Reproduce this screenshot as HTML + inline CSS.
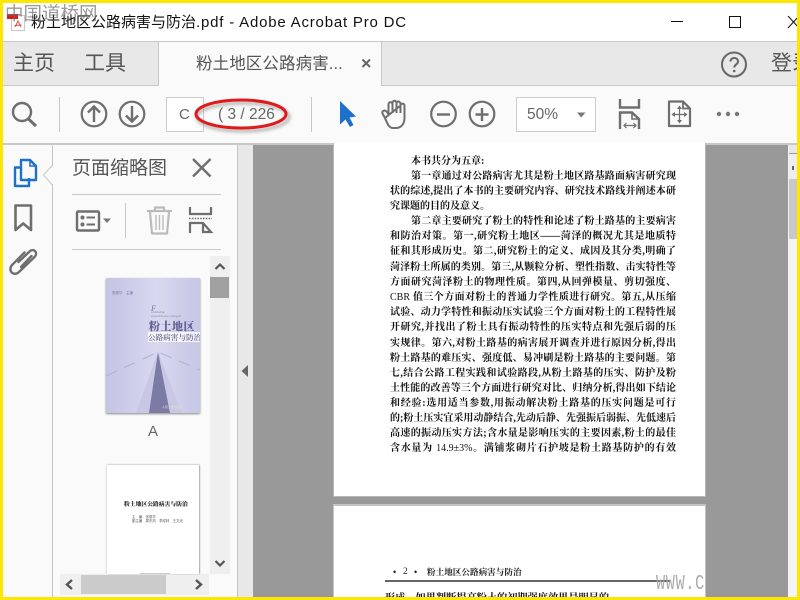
<!DOCTYPE html>
<html lang="zh"><head><meta charset="utf-8"><title>Acrobat</title>
<style>
html,body{margin:0;padding:0;background:#fff}
#r{position:relative;width:800px;height:600px;overflow:hidden;background:#fff;font-family:"Liberation Sans","Noto Sans CJK SC",sans-serif}
.a{position:absolute}
.t{position:absolute;white-space:nowrap;line-height:1}
.l{position:absolute;left:390px;width:286px;height:14px;margin-top:2px;overflow:hidden;font:700 10px/14px "Liberation Serif","Noto Serif CJK SC",serif;color:#111;text-align:justify;text-align-last:justify;filter:blur(.25px)}
.l span{font-weight:400}
.i{left:411px;width:265px}
.n{text-align-last:left}
</style></head><body><div id="r">
<div class="a" style="left:0;top:42px;width:800px;height:44px;background:#e8e8e8"></div>
<div class="a" style="left:0;top:41px;width:800px;height:1px;background:#c8c8c8"></div>
<div class="a" style="left:158px;top:42px;width:224px;height:44px;background:#fafafa;border-left:1px solid #c8c8c8;border-right:1px solid #c8c8c8;box-sizing:border-box"></div>
<div class="a" style="left:0;top:85px;width:158px;height:1px;background:#c8c8c8"></div>
<div class="a" style="left:382px;top:85px;width:418px;height:1px;background:#c8c8c8"></div>
<div class="a" style="left:0;top:86px;width:800px;height:57px;background:#fafafa"></div>
<div class="a" style="left:0;top:143px;width:800px;height:2px;background:#c8c8c8"></div>
<div class="a" style="left:0;top:145px;width:238px;height:455px;background:#fafafa"></div>
<div class="a" style="left:52px;top:145px;width:1px;height:455px;background:#c4c4c4"></div>
<div class="a" style="left:237px;top:145px;width:16px;height:455px;background:#e8e8e8;border-left:1px solid #c4c4c4;box-sizing:border-box"></div>
<div class="a" style="left:253px;top:145px;width:536px;height:455px;background:#999"></div>
<div class="a" style="left:788px;top:145px;width:12px;height:455px;background:#f4f4f4"></div>
<div class="a" style="left:789px;top:145px;width:8px;height:8px;background:#e8e8e8"></div>
<div class="a" style="left:789px;top:153px;width:8px;height:1px;background:#999"></div>
<div class="a" style="left:789px;top:154px;width:8px;height:25px;background:#eee"></div>
<div class="a" style="left:789px;top:179px;width:8px;height:60px;background:#c8c8c8"></div>

<div class="a" style="left:333px;top:143px;width:373px;height:354px;background:#fff;border:1px solid #b8b8b8;border-top:0;box-sizing:border-box"></div>
<div class="a" style="left:333px;top:504px;width:373px;height:96px;background:#fff;border:1px solid #c4c4c4;border-top-width:2px;box-sizing:border-box"></div>

<div class="l n i" style="top:153px">本书共分为五章:</div>
<div class="l i" style="top:168px">第一章通过对公路病害尤其是粉土地区路基路面病害研究现</div>
<div class="l" style="top:183px">状的综述,提出了本书的主要研究内容、研究技术路线并阐述本研</div>
<div class="l n" style="top:198px">究课题的目的及意义。</div>
<div class="l i" style="top:213px">第二章主要研究了粉土的特性和论述了粉土路基的主要病害</div>
<div class="l" style="top:228px">和防治对策。第一,研究粉土地区——菏泽的概况尤其是地质特</div>
<div class="l" style="top:243px">征和其形成历史。第二,研究粉土的定义、成因及其分类,明确了</div>
<div class="l" style="top:259px">菏泽粉土所属的类别。第三,从颗粒分析、塑性指数、击实特性等</div>
<div class="l" style="top:274px">方面研究菏泽粉土的物理性质。第四,从回弹模量、剪切强度、</div>
<div class="l" style="top:289px"><span>CBR</span> 值三个方面对粉土的普通力学性质进行研究。第五,从压缩</div>
<div class="l" style="top:304px">试验、动力学特性和振动压实试验三个方面对粉土的工程特性展</div>
<div class="l" style="top:319px">开研究,并找出了粉土具有振动特性的压实特点和先强后弱的压</div>
<div class="l" style="top:335px">实规律。第六,对粉土路基的病害展开调查并进行原因分析,得出</div>
<div class="l" style="top:350px">粉土路基的难压实、强度低、易冲刷是粉土路基的主要问题。第</div>
<div class="l" style="top:365px">七,结合公路工程实践和试验路段,从粉土路基的压实、防护及粉</div>
<div class="l" style="top:380px">土性能的改善等三个方面进行研究对比、归纳分析,得出如下结论</div>
<div class="l" style="top:395px">和经验:选用适当参数,用振动解决粉土路基的压实问题是可行</div>
<div class="l" style="top:410px">的;粉土压实宜采用动静结合,先动后静、先强振后弱振、先低速后</div>
<div class="l" style="top:425px">高速的振动压实方法;含水量是影响压实的主要因素,粉土的最佳</div>
<div class="l" style="top:440px">含水量为 <span>14.9±3%</span>。满铺浆砌片石护坡是粉土路基防护的有效</div>

<div class="t" style="left:393px;top:566px;font:600 9px/12px 'Liberation Serif',serif;color:#222">•</div>
<div class="t" style="left:403px;top:566px;font:400 9.5px/12px 'Liberation Serif',serif;color:#222">2</div>
<div class="t" style="left:414px;top:566px;font:600 9px/12px 'Liberation Serif',serif;color:#222">•</div>
<div class="t" style="left:427px;top:566px;font:700 8.6px/12px 'Liberation Serif','Noto Serif CJK SC',serif;color:#222">粉土地区公路病害与防治</div>
<div class="a" style="left:385px;top:580px;width:285px;height:2px;background:#666"></div>
<div class="t" style="left:656px;top:574px;font:21px/22px 'Liberation Mono',monospace;color:#aaa;transform:scaleX(.72);transform-origin:0 0;letter-spacing:1px">WWW.C</div>
<div class="t" style="left:385px;top:592px;font:700 10.2px/14px 'Liberation Serif','Noto Serif CJK SC',serif;color:#111">形成。如果判断提高粉土的初期强度效果是明显的</div>

<!-- title -->
<div class="t" style="left:31px;top:14px;font-size:15px;line-height:18px;color:#111">粉土地区公路病害与防治<span style="letter-spacing:.8px">.pdf - Adobe Acrobat Pro DC</span></div>
<div class="t" style="left:13px;top:52px;font-size:21px;line-height:23px;color:#555">主页</div>
<div class="t" style="left:84px;top:52px;font-size:21px;line-height:23px;color:#555">工具</div>
<div class="t" style="left:196px;top:55px;font-size:16.5px;line-height:19px;color:#555;letter-spacing:.1px">粉土地区公路病害...</div>
<div class="t" style="left:771px;top:52px;font-size:21px;line-height:23px;color:#555">登录</div>
<div class="a" style="left:166px;top:97px;width:38px;height:35px;background:#fff;border:1px solid #ccc;box-sizing:border-box"></div>
<div class="t" style="left:179px;top:106px;font-size:15px;line-height:17px;color:#666">C</div>
<div class="t" style="left:218px;top:106px;font-size:15.5px;line-height:17px;color:#666;white-space:pre">( 3 / 226</div>
<div class="a" style="left:516px;top:97px;width:80px;height:35px;background:#fff;border:1px solid #ccc;box-sizing:border-box"></div>
<div class="t" style="left:527px;top:106px;font-size:15.5px;line-height:17px;color:#666">50%</div>
<div class="t" style="left:72px;top:158px;font-size:19px;line-height:21px;color:#555">页面缩略图</div>

<!-- scrollbars for panel -->
<div class="a" style="left:210px;top:256px;width:20px;height:318px;background:#efefef"></div>
<div class="a" style="left:210px;top:277px;width:19px;height:21px;background:#a0a0a0"></div>
<div class="a" style="left:60px;top:574px;width:149px;height:21px;background:#efefef"></div>
<div class="a" style="left:81px;top:575px;width:85px;height:19px;background:#cbcbcb"></div>

<!-- cover -->
<svg class="a" style="left:106px;top:278px;box-shadow:0 1px 2px #888;filter:blur(.3px)" width="94" height="135" viewBox="0 0 94 135">
<defs><linearGradient id="g" x1="0" y1="0" x2="1" y2="0"><stop offset="0" stop-color="#c4c4e4"/><stop offset=".55" stop-color="#d8d8f0"/><stop offset="1" stop-color="#c6c6e6"/></linearGradient></defs>
<rect width="94" height="135" fill="url(#g)"/>
<path d="M0 98 L52 74 L94 92" fill="none" stroke="#aeaed0" stroke-width="1" stroke-dasharray="12 8"/>
<polygon points="52,74 30,135 76,135" fill="#c8c8e4"/>
<polygon points="52,74 43,135 64,135" fill="#7c7ba6"/>
<rect x="42" y="54" width="52" height="10" fill="#fff" opacity=".8"/>
<text x="6" y="16" font-size="3.5" fill="#77779a" font-family="Noto Sans CJK SC">张丽华　主编</text>
<text x="45" y="33" font-size="8" font-style="italic" fill="#77779a" font-family="Liberation Serif">F</text>
<text x="45" y="35" font-size="3" font-style="italic" fill="#8a8aaa" font-family="Liberation Serif">     enshitudiqu</text>
<text x="45" y="39" font-size="3" font-style="italic" fill="#8a8aaa" font-family="Liberation Serif">gonglubinghai yufangzhi</text>
<text x="43" y="52" font-size="11" font-weight="900" fill="#5e5e90" font-family="Noto Serif CJK SC" letter-spacing=".5">粉土地区</text>
<text x="42" y="62" font-size="7.6" font-weight="600" fill="#62628a" font-family="Noto Serif CJK SC">公路病害与防治</text>
<text x="56" y="130" font-size="3" fill="#ddd" font-family="Noto Sans CJK SC">人民交通出版社</text>
</svg>
<div class="t" style="left:148px;top:423px;font-size:15px;line-height:17px;color:#666">A</div>

<!-- second thumb -->
<div class="a" style="left:107px;top:465px;width:92px;height:109px;background:#fff;box-shadow:1px 0 1px #aaa,-1px 0 1px #ddd,0 -1px 1px #ddd;overflow:hidden">
<div class="t" style="left:17px;top:34px;font:900 5.8px/9px 'Noto Serif CJK SC',serif;color:#222">粉土地区公路病害与防治</div>
<div class="t" style="left:25px;top:49px;font:3.4px/5px 'Noto Sans CJK SC',sans-serif;color:#555">主　编　张丽华</div>
<div class="t" style="left:25px;top:53px;font:3.4px/5px 'Noto Sans CJK SC',sans-serif;color:#555">副主编　周东风　李成林　王文光</div>
<div class="a" style="left:33px;top:108px;width:30px;height:1px;background:#ccc"></div>
</div>

<!-- icons -->
<svg class="a" style="left:0;top:0" width="800" height="600" viewBox="0 0 800 600" fill="none">
<!-- pdf icon -->
<rect x="11.5" y="15.5" width="13" height="15" fill="#fff" stroke="#c8c8c8"/>
<path d="M15 27 L18 21 L21 27 M14.5 25.5 L21.5 25" stroke="#d44" stroke-width=".9"/>
<rect x="7" y="14" width="11" height="5" fill="#e01818"/>
<!-- window -->
<path d="M671 21.5H683" stroke="#111"/>
<rect x="729.5" y="16.5" width="11" height="11" stroke="#111"/>
<path d="M788 16L799 28M788 28L799 16" stroke="#111"/>
<!-- tab close -->
<path d="M362.5 59.5L370 67M370 59.5L362.5 67" stroke="#666" stroke-width="2"/>
<!-- help -->
<circle cx="734" cy="64.5" r="12" stroke="#666" stroke-width="2"/>
<path d="M730.5 61.5C730.5 56.8 738 57 738 61.5C738 64.5 734.2 64.6 734.2 67.5" stroke="#666" stroke-width="2"/>
<circle cx="734.2" cy="71" r="1.3" fill="#666"/>
<!-- search -->
<circle cx="22" cy="112" r="9" stroke="#6e6e6e" stroke-width="2.4"/>
<path d="M28.5 119L36 126" stroke="#6e6e6e" stroke-width="3"/>
<path d="M59.5 97V132M311.5 97V132" stroke="#c8c8c8"/>
<!-- page nav -->
<circle cx="94" cy="114" r="12.3" stroke="#6e6e6e" stroke-width="2.2"/>
<path d="M94 122V106.5M88 112.5L94 106.5L100 112.5" stroke="#6e6e6e" stroke-width="2.4"/>
<circle cx="132" cy="114" r="12.3" stroke="#6e6e6e" stroke-width="2.2"/>
<path d="M132 106V121.5M126 115.5L132 121.5L138 115.5" stroke="#6e6e6e" stroke-width="2.4"/>
<!-- red ellipse -->
<ellipse cx="243" cy="117" rx="46" ry="14" stroke="#777" stroke-width="3" opacity=".55" style="filter:blur(1.5px)"/>
<ellipse cx="241" cy="114" rx="45" ry="14" stroke="#e01a1a" stroke-width="3"/>
<!-- arrow -->
<path d="M340 101V124.5L345.5 119.5L350 127L353.5 125L349.5 117.5L356 116.5Z" fill="#1d71c8"/>
<!-- hand -->
<path d="M385 118L382.5 113.5C381.5 111 385 109.5 386.5 111.5L388.5 114V104.5C388.5 101.5 392 101.5 392.5 104V113M392.5 103C392.5 100 396.5 100 396.5 103V113M396.5 103.5C396.5 100.5 400.5 101 400.5 104V113M400.5 105.5C400.5 103 404.5 103 404.5 105.5V118C404.5 124 401 128 396 128H393C389 128 387.5 124 385 118Z" stroke="#6e6e6e" stroke-width="2" stroke-linejoin="round"/>
<!-- zoom -->
<circle cx="443.5" cy="114" r="12.3" stroke="#6e6e6e" stroke-width="2.2"/>
<path d="M437 114.5H450" stroke="#6e6e6e" stroke-width="2.4"/>
<circle cx="482" cy="114" r="12.3" stroke="#6e6e6e" stroke-width="2.2"/>
<path d="M475.5 114.5H488.5M482 108V121" stroke="#6e6e6e" stroke-width="2.4"/>
<path d="M577 112.5H585.5L581.2 117.5Z" fill="#777"/>
<!-- fit width -->
<path d="M620 99V107.5H639V99" stroke="#6e6e6e" stroke-width="2.4"/>
<path d="M620 129V112.5H632L639 119V129" stroke="#6e6e6e" stroke-width="2.4"/>
<path d="M632 112.5V119H639" stroke="#6e6e6e" stroke-width="1.6"/>
<path d="M624 125.5H636M626.5 123L624 125.5L626.5 128M633.5 123L636 125.5L633.5 128" stroke="#6e6e6e" stroke-width="1.2"/>
<!-- fit page -->
<path d="M669 101.5H683L690 108.5V126H669Z" stroke="#6e6e6e" stroke-width="2.2" stroke-linejoin="round"/>
<path d="M683 101.5V108.5H690" stroke="#6e6e6e" stroke-width="1.8"/>
<path d="M679.5 106.5V122.5M672 114.5H687" stroke="#6e6e6e" stroke-width="1.2"/>
<path d="M677 109L679.5 105.5L682 109ZM677 120L679.5 123.5L682 120ZM675 112L671.5 114.5L675 117ZM684 112L687.5 114.5L684 117Z" fill="#6e6e6e"/>
<!-- dots -->
<circle cx="719" cy="114" r="2.2" fill="#777"/><circle cx="728" cy="114" r="2.2" fill="#777"/><circle cx="737" cy="114" r="2.2" fill="#777"/>
<!-- nav notch -->
<path d="M52.5 165L43.5 175L52.5 185" fill="#fafafa" stroke="#c8c8c8"/>
<path d="M53 166V184" stroke="#fafafa" stroke-width="2"/>
<!-- pages icon -->
<path d="M21 167.5H15V186H29V178" stroke="#1d71c8" stroke-width="2.4" stroke-linejoin="round"/>
<path d="M21 160H30L36 166V180H21Z" stroke="#1d71c8" stroke-width="2.4" stroke-linejoin="round"/>
<path d="M30 160V166H36" stroke="#1d71c8" stroke-width="1.6"/>
<!-- bookmark -->
<path d="M15.5 205.5H31V230L23.2 223.5L15.5 230Z" stroke="#6e6e6e" stroke-width="2.6" stroke-linejoin="round"/>
<!-- paperclip -->
<path d="M19 262L30 251.5C34.5 247.5 39 253 35 257L19.5 272C14 277 8 270.5 12.5 265L25 252.5M21.5 267L32 256" stroke="#6e6e6e" stroke-width="2.4" stroke-linecap="round" transform="translate(-.5,0)"/>
<!-- panel -->
<path d="M193 159L210.5 176.5M210.5 159L193 176.5" stroke="#6e6e6e" stroke-width="2.4"/>
<path d="M72 194.5H221M72 249.5H221" stroke="#c8c8c8"/>
<rect x="77" y="211.5" width="22" height="19" rx="1" stroke="#6e6e6e" stroke-width="2.4"/>
<circle cx="82.5" cy="217.5" r="2" fill="#6e6e6e"/><circle cx="82.5" cy="224.5" r="2" fill="#6e6e6e"/>
<path d="M86.5 217.5H95M86.5 224.5H95" stroke="#6e6e6e" stroke-width="2"/>
<path d="M103 218.5H111L107 223Z" fill="#777"/>
<path d="M125.5 203V238" stroke="#c8c8c8"/>
<path d="M147 211H172M155 211V207.5H164V211M150 212L152 233.5H167L169 212" stroke="#bbb" stroke-width="2.2" stroke-linejoin="round"/>
<path d="M156 215V230M159.5 215V230M163 215V230" stroke="#bbb" stroke-width="1.4"/>
<path d="M190 207V214H211V207" stroke="#6e6e6e" stroke-width="2.2"/>
<path d="M189 218.5H212" stroke="#6e6e6e" stroke-width="1.6" stroke-dasharray="1.6 1.2"/>
<path d="M190 233V223H203L211 232H203V224" stroke="#6e6e6e" stroke-width="2.2"/>
<!-- panel scroll arrows -->
<path d="M215.5 269L220 264.5L224.5 269" stroke="#555" stroke-width="2.2"/>
<path d="M215.5 561L220 565.5L224.5 561" stroke="#555" stroke-width="2.2"/>
<path d="M72 580L67 584.5L72 589" stroke="#555" stroke-width="2.4"/>
<path d="M196 580L201 584.5L196 589" stroke="#555" stroke-width="2.4"/>
<path d="M248 365V377L241.5 371Z" fill="#666"/>
<path d="M793 166V170" stroke="#666" stroke-width="2"/>
</svg>
<div class="t" style="left:5px;top:3px;font:400 18.5px/20px 'WenQuanYi Zen Hei','Noto Sans CJK SC',sans-serif;color:rgba(110,110,110,.7)">中国道桥网</div>

<!-- yellow frame -->
<div class="a" style="left:0;top:0;width:800px;height:3px;background:#ffe600"></div>
<div class="a" style="left:0;top:597px;width:800px;height:3px;background:#ffe600"></div>
<div class="a" style="left:0;top:0;width:3px;height:600px;background:#ffe600"></div>
<div class="a" style="left:797px;top:0;width:3px;height:600px;background:#ffe600"></div>
</div></body></html>
